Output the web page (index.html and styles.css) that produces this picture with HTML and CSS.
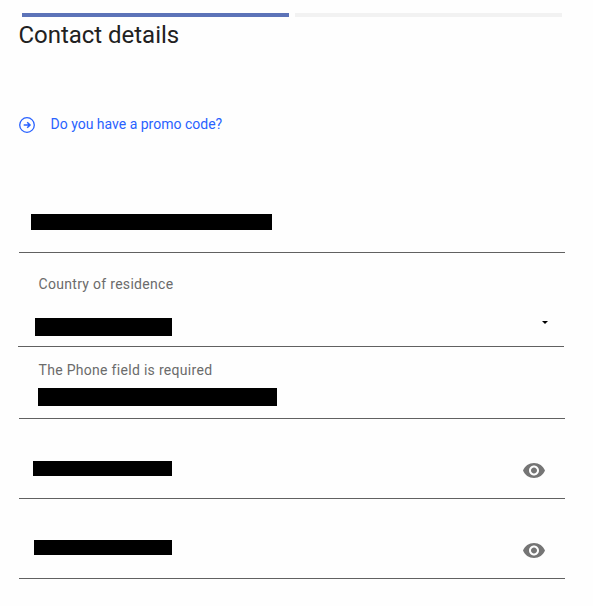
FILE: index.html
```html
<!DOCTYPE html>
<html lang="en">
<head>
<meta charset="utf-8">
<title>Contact details</title>
<link rel="stylesheet" href="styles.css">
</head>
<body>
<main class="form">
  <div class="progress"><span class="step step-active"></span><span class="step"></span></div>
  <h1 class="title"><span>Contact details</span></h1>
  <a class="promo">
    <svg class="promo-icon" width="16" height="16" viewBox="0 0 16 16" fill="none" stroke="currentColor"><circle cx="8" cy="8" r="7.3" stroke-width="1.3"/><path d="M4.7 8h6M8.2 5.3 11 8l-2.800 2.700" stroke-width="1.5"/></svg>
    <span class="promo-text">Do you have a promo code?</span>
  </a>
  <section class="field field-email"><span class="mask"></span></section>
  <section class="field field-country">
    <label class="label"><span class="country-text">Country of residence</span></label>
    <div class="row"><span class="mask"></span><svg class="caret" width="6" height="3" viewBox="0 0 6 3"><path d="M0 0h6L3 3z"/></svg></div>
  </section>
  <section class="field field-phone">
    <label class="label"><span class="phone-text">The Phone field is required</span></label>
    <span class="mask"></span>
  </section>
  <section class="field field-password">
    <span class="mask"></span>
    <svg class="eye" width="24" height="24" viewBox="0 -0.5 24 24"><path d="M12 4.500C7 4.500 2.730 7.610 1 12c1.730 4.390 6 7.500 11 7.500s9.270-3.110 11-7.500c-1.730-4.390-6-7.500-11-7.500zM12 17c-2.760 0-5-2.240-5-5s2.240-5 5-5 5 2.240 5 5-2.240 5-5 5zm0-8c-1.660 0-3 1.340-3 3s1.340 3 3 3 3-1.340 3-3-1.340-3-3-3z"/></svg>
  </section>
  <section class="field field-password field-confirm">
    <span class="mask"></span>
    <svg class="eye" width="24" height="24" viewBox="0 -0.5 24 24"><path d="M12 4.500C7 4.500 2.730 7.610 1 12c1.730 4.390 6 7.500 11 7.500s9.270-3.110 11-7.500c-1.730-4.390-6-7.500-11-7.500zM12 17c-2.760 0-5-2.240-5-5s2.240-5 5-5 5 2.240 5 5-2.240 5-5 5zm0-8c-1.660 0-3 1.340-3 3s1.340 3 3 3 3-1.340 3-3-1.340-3-3-3z"/></svg>
  </section>
</main>
</body>
</html>
```
FILE: styles.css
```css
* { box-sizing: border-box; }
body { margin: 0; background: #fefefe; font-family: Roboto, sans-serif; }
.form { display: flex; flex-direction: column; width: 546px; margin-left: 19px; padding-top: 13px; }
.progress { display: flex; gap: 6px; margin: 0 3px; height: 4px; }
.step { width: 267px; background: #f2f2f2; }
.step-active { background: #5c73b8; }
.title { margin: 4px 0 0 -0.5px; font-size: 24px; line-height: 28px; font-weight: 400; letter-spacing: -0.03px; color: #212121; }
.promo { display: flex; align-items: center; gap: 15.5px; height: 20px; margin: 65px 0 1px; color: #2962ff; font-size: 14px; line-height: 20px; }
.promo-icon { margin-top: 1px; }
.field { display: flex; border-bottom: 1px solid #616161; }
.mask { display: block; background: #000; }
.label { color: #6b6b6b; font-size: 14px; line-height: 20px; letter-spacing: 0.3px; }
.field-email { height: 118px; padding: 79px 0 0 12px; }
.field-email .mask { width: 241px; height: 16px; }
.field-country { flex-direction: column; height: 94px; margin: 0 1px 0 -1px; padding-top: 21px; }
.field-country .label { padding-left: 20.5px; }
.row { display: flex; justify-content: space-between; margin-top: 24px; padding: 0 16px 0 17px; }
.row .mask { width: 137px; height: 18px; }
.caret { margin-top: 3px; }
.field-phone { flex-direction: column; height: 72px; padding: 13px 0 0 19.5px; }
.field-phone .mask { width: 239px; height: 18px; margin: 8px 0 0 -0.5px; }
.field-password { justify-content: space-between; align-items: flex-start; height: 80px; padding: 39px 19px 0 14px; }
.field-password .mask { width: 139px; height: 15px; margin-top: 3px; }
.eye { fill: #757575; }
.field-confirm { padding-left: 15px; }
.field-confirm .mask { width: 138px; margin-top: 2px; }
```
